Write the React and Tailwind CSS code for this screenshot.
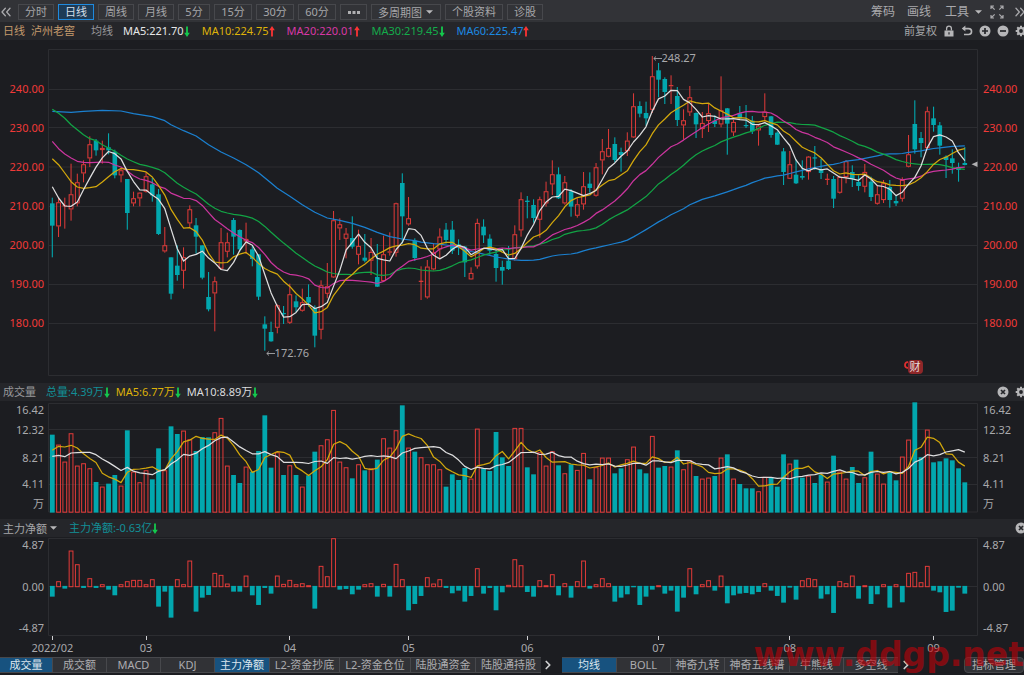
import React from "react";
import { ChevronsLeft, ChevronsRight, ChevronRight } from "lucide-react";

/* ---------- Price data ----------
   Each segment: [base, rows]; a row is [direction, high, bodyTop, bodyBottom, low],
   three units to one chart pixel, measured downwards from the segment's base. */
const SEGMENTS = [
  [132, [
    ["D", 461, 478, 545, 640], ["U", 463, 475, 547, 579], ["U", 461, 484, 487, 554], ["U", 359, 451, 496, 530],
    ["U", 389, 415, 478, 487], ["U", 349, 361, 388, 415], ["U", 277, 301, 343, 369], ["D", 285, 290, 319, 335],
    ["U", 290, 312, 318, 359], ["D", 268, 310, 319, 331], ["D", 317, 323, 394, 403], ["U", 371, 379, 394, 415],
    ["D", 405, 405, 507, 557], ["U", 443, 463, 478, 487], ["U", 445, 446, 463, 487], ["U", 385, 397, 443, 446],
    ["D", 402, 421, 454, 473], ["D", 435, 451, 570, 573], ["U", 549, 604, 622, 626], ["D", 640, 640, 749, 766],
    ["D", 604, 665, 693, 710], ["U", 610, 640, 680, 734], ["U", 484, 496, 538, 551], ["D", 522, 544, 578, 629],
    ["D", 604, 604, 701, 706], ["D", 684, 759, 796, 802], ["U", 698, 712, 748, 862], ["U", 552, 595, 674, 677],
    ["U", 566, 595, 623, 640], ["D", 522, 528, 578, 632], ["D", 556, 558, 616, 623], ["U", 536, 585, 592, 630],
    ["D", 606, 616, 645, 667],
  ]],
  [420, [
    ["D", 343, 343, 470, 480], ["D", 529, 553, 566, 632], ["D", 545, 576, 604, 605], ["U", 493, 496, 563, 580],
    ["D", 498, 519, 521, 552], ["U", 431, 463, 548, 552], ["D", 466, 484, 502, 516], ["U", 446, 487, 512, 515],
    ["D", 433, 471, 488, 500], ["D", 496, 504, 587, 622], ["U", 421, 436, 569, 598], ["U", 369, 439, 461, 475],
    ["U", 213, 241, 412, 414], ["U", 235, 253, 265, 300], ["U", 264, 281, 296, 355], ["D", 229, 294, 320, 326],
    ["U", 269, 318, 344, 373], ["D", 282, 353, 362, 367], ["U", 294, 336, 362, 405], ["D", 312, 411, 440, 441],
    ["U", 287, 343, 423, 426], ["U", 277, 334, 338, 347], ["U", 188, 190, 338, 350], ["D", 100, 129, 229, 311],
    ["U", 171, 235, 253, 257], ["D", 295, 302, 354, 363], ["U", 379, 423, 425, 480], ["U", 360, 380, 472, 476],
    ["U", 309, 337, 388, 391], ["U", 265, 290, 328, 355], ["D", 249, 269, 300, 311], ["D", 243, 269, 332, 342],
    ["D", 298, 313, 322, 345], ["D", 318, 320, 367, 411], ["U", 382, 399, 418, 419], ["U", 236, 249, 379, 386],
    ["D", 238, 260, 286, 309], ["D", 283, 296, 332, 344], ["D", 330, 342, 384, 425], ["D", 362, 381, 392, 434],
    ["D", 318, 362, 387, 390], ["U", 256, 283, 358, 362], ["U", 157, 178, 271, 290], ["D", 168, 182, 186, 235],
    ["D", 178, 195, 234, 248], ["U", 170, 178, 239, 293], ["U", 125, 154, 190, 200], ["U", 61, 103, 133, 165],
    ["D", 82, 103, 175, 177], ["U", 108, 127, 190, 194], ["D", 147, 154, 200, 230], ["U", 175, 193, 227, 233],
    ["U", 96, 139, 193, 209], ["D", 97, 131, 144, 158],
  ]],
  [132, [
    ["U", 357, 370, 455, 458], ["U", 285, 322, 349, 391], ["U", 255, 312, 338, 340], ["D", 280, 300, 348, 355],
    ["D", 311, 324, 333, 383], ["U", 265, 290, 321, 336], ["U", 148, 187, 280, 282], ["D", 172, 186, 209, 220],
    ["D", 173, 207, 223, 245], ["U", 36, 97, 197, 207], ["D", 57, 79, 107, 160], ["D", 100, 105, 144, 180],
    ["U", 94, 123, 127, 180], ["D", 129, 156, 228, 246], ["U", 196, 229, 244, 287], ["U", 126, 160, 205, 216],
    ["D", 205, 207, 241, 282], ["U", 204, 237, 255, 282], ["U", 180, 208, 231, 264], ["D", 214, 230, 240, 249],
    ["U", 97, 199, 241, 250], ["D", 192, 193, 239, 332], ["U", 228, 234, 265, 276], ["D", 186, 208, 223, 226],
    ["D", 183, 243, 246, 252], ["D", 216, 230, 262, 270], ["U", 240, 245, 259, 305], ["U", 148, 203, 219, 232],
    ["D", 216, 217, 273, 281], ["D", 262, 266, 302, 303],
  ]],
  [240, [
    ["D", 204, 214, 276, 315], ["U", 213, 253, 296, 297], ["D", 238, 284, 310, 312], ["D", 241, 288, 293, 299],
    ["U", 228, 230, 276, 299], ["D", 198, 232, 235, 270], ["D", 237, 267, 279, 297], ["U", 281, 297, 299, 315],
    ["D", 288, 297, 356, 384], ["U", 287, 291, 338, 341], ["U", 240, 244, 291, 310], ["D", 256, 276, 296, 321],
    ["D", 286, 306, 318, 332], ["U", 252, 276, 320, 337], ["D", 290, 305, 351, 363], ["U", 316, 343, 371, 374],
    ["U", 300, 310, 360, 369], ["D", 300, 321, 360, 383], ["D", 347, 363, 370, 378], ["U", 292, 300, 356, 365],
    ["U", 165, 223, 260, 262], ["D", 61, 132, 208, 221], ["D", 156, 174, 189, 232], ["U", 80, 94, 204, 206],
    ["D", 80, 115, 135, 155], ["D", 126, 136, 197, 224], ["D", 226, 230, 240, 294], ["D", 208, 235, 249, 281],
    ["D", 248, 261, 270, 305], ["D", 201, 249, 255, 256],
  ]],
];

const CANDLES = SEGMENTS.flatMap(([base, rows]) =>
  rows.map(([dir, ...v]) => {
    const [high, top, bottom, low] = v.map((n) => (n + base) / 3 - 40);
    return { up: dir === "U", high, top, bottom, low };
  })
);

/* Averages for the days before enough closes are on the chart. */
const MA_HEADS = {
  5: [560, 594, 618, 619],
  10: [476, 494, 519, 545, 561, 565, 563, 560, 546],
  20: [424, 446, 462, 474, 484, 487, 488, 487, 486, 487, 495, 501, 513, 527, 537, 541, 548, 559, 565],
  30: [328, 340, 355, 374, 389, 404, 416, 422, 434, 444, 454, 466, 477, 485, 493, 497, 502, 508, 518, 534, 550, 562, 572, 582, 597, 613, 625, 634, 639],
};
const MA60_HEAD = [
  [0, 334], [3, 337], [5, 334], [8, 331], [11, 333], [13, 341], [16, 350], [18, 362], [19, 374], [21, 392],
  [23, 408], [25, 434], [27, 456], [29, 474], [31, 494], [33, 518], [35, 549], [36, 565], [38, 589], [40, 614],
  [42, 637], [44, 654], [46, 661], [48, 670], [50, 682], [52, 697], [54, 710], [56, 717], [58, 722],
];

const VOLUME_TOPS = [
  164, 194, 245, 160, 257, 250, 265, 306, 320, 311, 285, 317, 151, 275, 307, 271, 298, 205, 271, 139, 162,
  152, 178, 213, 171, 172, 157, 114, 257, 285, 309, 260, 275, 213, 106, 263, 217, 285, 256, 285, 320, 286,
  215, 196, 178, 90, 245, 262, 295, 253, 271, 265, 239, 175, 203, 151, 76, 203, 215, 232, 253, 253, 268,
  320, 283, 300, 264, 296, 146, 265, 273, 156, 232, 258, 144, 144, 262, 283, 217, 257, 214, 256, 280, 253,
  270, 219, 298, 262, 233, 233, 280, 265, 238, 200, 268, 280, 168, 263, 258, 260, 211, 268, 241, 288, 296,
  293, 288, 233, 223, 296, 312, 325, 325, 334, 291, 291, 320, 223, 251, 239, 293, 287, 309, 284, 305, 227,
  275, 296, 261, 309, 292, 215, 281, 311, 277, 301, 230, 179, 67, 232, 149, 247, 244, 235, 241, 265, 307,
];
const VOLUME_HEADS = {
  5: [211, 199, 201, 196],
  10: [229, 226, 230, 219, 218, 217, 217, 224, 237],
};

const FLOW = [
  -31, 15, -7, 107, 66, -5, 24, -5, 6, -10, -27, 6, 15, 19, 19, 6, 21, -61, -16, -94, 21, 6, 77, -76, -34,
  -26, 40, 34, 8, -16, -16, 32, -27, -56, -5, -22, 32, 7, 19, 6, 9, 3, -67, 61, 30, 144, -10, -8, -24, -10,
  6, 9, -31, 7, -31, 67, 21, -72, -53, -29, 27, 8, 21, -5, -21, -13, -46, -29, 54, -22, -5, -72, -18, 4, 81,
  63, -17, -31, 18, 3, 36, -27, 9, -34, 15, 77, -7, 6, 24, 9, -46, -34, -24, -3, -56, -31, -10, 3, -22, -13,
  -76, -34, 54, -24, 6, 18, -13, 32, -51, -27, -22, -20, -24, -17, 9, -13, -29, -49, -4, -40, 18, 24, 21,
  -37, -24, -80, 15, 9, 32, -37, 3, -53, -24, 6, -64, 6, -48, 40, 43, 12, 61, -13, -18, -77, -73, -4, -22,
];

const MONTHS = [
  [0, "2022/02"], [15, "03"], [38, "04"], [57, "05"], [76, "06"], [97, "07"], [118, "08"], [141, "09"],
];

const TEAL = "#02a7ae";
const RED = "#e33b39";
const GRID = "#2c2d31";
const xAt = (i) => 4.3 + i * 6.25;

const average = (values, n) => {
  const out = [];
  for (let i = n - 1; i < values.length; i++) {
    let sum = 0;
    for (let k = i - n + 1; k <= i; k++) sum += values[k];
    out.push([i, sum / n]);
  }
  return out;
};
const points = (pairs) => pairs.map(([i, y]) => `${xAt(i).toFixed(1)},${y.toFixed(1)}`).join(" ");

const closes = CANDLES.map((c) => (c.up ? c.top : c.bottom));
const priceLine = (n) =>
  points([...MA_HEADS[n].map((y, i) => [i, y / 3 - 40]), ...average(closes, n)]);
const price60 = points([...MA60_HEAD.map(([i, y]) => [i, y / 3 - 40]), ...average(closes, 60)]);

const volumeY = VOLUME_TOPS.map((t) => t / 3 - 21);
const volumeLine = (n) =>
  points([...VOLUME_HEADS[n].map((y, i) => [i, y / 3 - 21]), ...average(volumeY, n)]);

function Line({ pts, color }) {
  return <polyline points={pts} fill="none" stroke={color} strokeWidth="1.25" strokeLinejoin="round" />;
}

function Frame({ top, bottom, lines }) {
  return (
    <g stroke={GRID} fill="none">
      {lines.map((y) => (
        <path key={y} d={`M0.5 ${y}H929.5`} />
      ))}
      <path d={`M0.5 ${top}H929.5V${bottom}H0.5Z`} />
    </g>
  );
}

function PriceChart() {
  return (
    <svg viewBox="0 0 930 343" preserveAspectRatio="none" className="absolute inset-0 size-full" role="img" aria-label="日线">
      <Frame top={9.5} bottom={335.5} lines={[49.5, 87.5, 127, 166.5, 205.5, 244.5, 283.5]} />
      {CANDLES.map((c, i) => {
        const x = xAt(i);
        const h = c.bottom - c.top;
        if (!c.up) {
          return (
            <g key={i} fill={TEAL}>
              <rect x={x - 0.55} y={c.high} width="1.1" height={c.low - c.high} />
              <rect x={x - 2.3} y={c.top} width="4.6" height={Math.max(h, 1.2)} />
            </g>
          );
        }
        return (
          <g key={i} fill="none" stroke={RED}>
            <path d={`M${x} ${c.high}V${c.top}M${x} ${c.bottom}V${c.low}`} />
            {h < 1.6 ? (
              <path d={`M${x - 2.3} ${c.top + h / 2}h4.6`} strokeWidth="1.2" />
            ) : (
              <rect x={x - 1.9} y={c.top + 0.4} width="3.8" height={Math.max(h - 0.8, 0.8)} />
            )}
          </g>
        );
      })}
      <Line pts={price60} color="#1b80d0" />
      <Line pts={priceLine(30)} color="#12a445" />
      <Line pts={priceLine(20)} color="#cb359e" />
      <Line pts={priceLine(10)} color="#d3a80c" />
      <Line pts={priceLine(5)} color="#dededf" />
      <path d="M929.5 121.5v5.5l-6-2.7z" fill="#b0b0b2" />
    </svg>
  );
}

function VolumeChart() {
  return (
    <svg viewBox="0 0 930 118" preserveAspectRatio="none" className="absolute inset-0 size-full" role="img" aria-label="成交量">
      <Frame top={2.5} bottom={111} lines={[28.5, 56.5, 83.5]} />
      {volumeY.map((y, i) =>
        CANDLES[i].up ? (
          <rect key={i} x={xAt(i) - 1.9} y={y + 0.4} width="3.8" height={110.8 - y} fill="none" stroke={RED} />
        ) : (
          <rect key={i} x={xAt(i) - 2.4} y={y} width="4.8" height={111.6 - y} fill={TEAL} />
        )
      )}
      <Line pts={volumeLine(5)} color="#d3a80c" />
      <Line pts={volumeLine(10)} color="#dededf" />
    </svg>
  );
}

function FlowChart() {
  const zero = 49.3;
  return (
    <svg viewBox="0 0 930 99" preserveAspectRatio="none" className="absolute inset-0 size-full" role="img" aria-label="主力净额">
      <Frame top={1.5} bottom={98.5} lines={[49.5]} />
      {FLOW.map((v, i) =>
        v > 0 ? (
          <rect key={i} x={xAt(i) - 1.9} y={zero - v / 3 + 0.4} width="3.8" height={v / 3} fill="none" stroke={RED} />
        ) : (
          <rect key={i} x={xAt(i) - 2.4} y={zero - 0.4} width="4.8" height={-v / 3 + 0.4} fill={TEAL} />
        )
      )}
    </svg>
  );
}

/* ---------- Small icons ---------- */
function Trend({ up }) {
  return (
    <svg viewBox="0 0 6 11" className="h-[11px] w-[6px] shrink-0" aria-hidden="true">
      <path
        d={up ? "M3 0L5.8 4.2H3.9V10.5H2.1V4.2H.2Z" : "M3 11L5.8 6.8H3.9V.5H2.1V6.8H.2Z"}
        fill={up ? "#fb3433" : "#14c94d"}
      />
    </svg>
  );
}

function Caret() {
  return (
    <svg viewBox="0 0 8 4" className="pointer-events-none h-1 w-[7px] shrink-0" aria-hidden="true">
      <path d="M0 0H8L4 4Z" fill="#b8b8ba" />
    </svg>
  );
}

function Pointer() {
  return (
    <svg viewBox="0 0 9 5" className="h-[5px] w-[9px]" fill="none" stroke="#a6a6a9" aria-hidden="true">
      <path d="M9 2.5H.8M3 .5L.8 2.5L3 4.5" strokeWidth=".9" />
    </svg>
  );
}

function IconButton({ label, children }) {
  return (
    <button type="button" aria-label={label} className="size-3 shrink-0 text-[#b6b6b8]">
      <svg viewBox="0 0 12 12" className="size-3" fill="currentColor" aria-hidden="true">
        {children}
      </svg>
    </button>
  );
}

const Gear = () => (
  <IconButton label="设置">
    <g stroke="currentColor" strokeWidth="2">
      <path d="M6 .7V11.3M.7 6H11.3M2.25 2.25L9.75 9.75M9.75 2.25L2.25 9.75" />
    </g>
    <circle cx="6" cy="6" r="4" />
    <circle cx="6" cy="6" r="1.9" fill="#25262a" />
  </IconButton>
);

const Close = () => (
  <IconButton label="关闭">
    <circle cx="6" cy="6" r="5.5" />
    <path d="M4 4L8 8M8 4L4 8" stroke="#25262a" strokeWidth="1.7" />
  </IconButton>
);

/* ---------- Page parts ---------- */
function PeriodButton({ width, active, children }) {
  return (
    <button
      type="button"
      className={`flex h-4 items-center justify-center border ${width} ${
        active ? "border-[#1f8ade] bg-[#1d3b56] text-[#d5dfe8]" : "border-[#47484c] text-[#a6a6a9]"
      }`}
    >
      {children}
    </button>
  );
}

const PERIODS = [
  ["分时", "w-9"], ["日线", "w-9"], ["周线", "w-9"], ["月线", "w-9"],
  ["5分", "w-8"], ["15分", "w-[38px]"], ["30分", "w-[38px]"], ["60分", "w-[38px]"],
];

function Toolbar() {
  return (
    <nav className="flex h-[22px] items-center justify-between overflow-hidden bg-[#323337] pt-0.5 text-[#a9a9ac]">
      <div className="flex items-center gap-1">
        <button type="button" aria-label="收起" className="w-[14px]">
          <ChevronsLeft className="-ml-0.5 h-[18px] w-4" preserveAspectRatio="none" strokeWidth={2} />
        </button>
        {PERIODS.map(([label, width]) => (
          <PeriodButton key={label} width={width} active={label === "日线"}>
            {label}
          </PeriodButton>
        ))}
        <PeriodButton width="w-[27px]">
          <svg viewBox="0 0 12 3" className="h-[3px] w-3" fill="#b0b0b2" role="img" aria-label="更多周期">
            <path d="M0 0h3v3H0zM4.5 0h3v3h-3zM9 0h3v3H9z" />
          </svg>
        </PeriodButton>
        <div className="flex h-4 w-[70px] items-center border border-[#47484c] pl-1.5 text-[#a6a6a9]">
          <select aria-label="多周期图" className="h-full w-12 appearance-none bg-transparent leading-none outline-none">
            <option>多周期图</option>
          </select>
          <Caret />
        </div>
        <PeriodButton width="w-[58px]">个股资料</PeriodButton>
        <PeriodButton width="w-9">诊股</PeriodButton>
      </div>
      <div className="-mr-1 flex items-center text-xs">
        <button type="button" className="mr-3">筹码</button>
        <button type="button" className="mr-3.5">画线</button>
        <button type="button" aria-haspopup="menu" className="mr-2 flex items-center gap-1.5">
          工具
          <Caret />
        </button>
        <button type="button" aria-label="全屏" className="mr-2">
          <svg viewBox="0 0 14 14" className="size-[14px]" fill="none" stroke="currentColor" strokeWidth="1.2" aria-hidden="true">
            <path d="M1 4V1H4M1 1L4.7 4.7M10 1H13V4M13 1L9.3 4.7M1 10V13H4M1 13L4.7 9.3M13 10V13H10M13 13L9.3 9.3" />
          </svg>
        </button>
        <button type="button" aria-label="展开">
          <ChevronsRight className="h-[18px] w-4" preserveAspectRatio="none" strokeWidth={2} />
        </button>
      </div>
    </nav>
  );
}

function Reading({ color, up, children }) {
  return (
    <span className={`flex items-center ${color}`}>
      {children}
      <Trend up={up} />
    </span>
  );
}

function InfoBar() {
  return (
    <header className="flex h-[18px] items-center justify-between overflow-hidden bg-[#25262a]">
      <div className="flex items-center gap-3 pl-[3px]">
        <span className="flex gap-1.5 pr-1 text-[#c49a6c]">
          <span>日线</span>
          <span>泸州老窖</span>
        </span>
        <span className="-mr-0.5 text-[#98989b]">均线</span>
        <Reading color="text-[#e6e6e8]">MA5:221.70</Reading>
        <Reading color="text-[#deb208]" up>MA10:224.75</Reading>
        <Reading color="text-[#d838a6]" up>MA20:220.01</Reading>
        <Reading color="text-[#14ac4a]">MA30:219.45</Reading>
        <Reading color="text-[#1c8ae2]" up>MA60:225.47</Reading>
      </div>
      <div className="-mr-[3px] flex items-center gap-1.5 text-[#a6a6a9]">
        <button type="button">前复权</button>
        <IconButton label="锁定">
          <path d="M1.5 5.5h9v6h-9z" />
          <path d="M3.6 5.5V3.6a2.4 2.4 0 0 1 4.8 0V5.5" fill="none" stroke="currentColor" strokeWidth="1.3" />
          <path d="M5.4 7.3h1.2v2.2H5.4z" fill="#25262a" />
        </IconButton>
        <IconButton label="撤销">
          <path d="M2.5 3.6H7.6a2.9 2.9 0 0 1 0 5.9H3" fill="none" stroke="currentColor" strokeWidth="1.6" />
          <path d="M4.4 .6V6.6L.8 3.6Z" />
        </IconButton>
        <IconButton label="放大">
          <circle cx="6" cy="6" r="5.5" />
          <path d="M6 3V9M3 6H9" stroke="#25262a" strokeWidth="1.7" />
        </IconButton>
        <IconButton label="缩小">
          <circle cx="6" cy="6" r="5.5" />
          <path d="M3 6H9" stroke="#25262a" strokeWidth="1.7" />
        </IconButton>
        <Gear />
      </div>
    </header>
  );
}

const PRICES = ["240.00", "230.00", "220.00", "210.00", "200.00", "190.00", "180.00"];

function PriceAxis({ side }) {
  return (
    <div className={`flex shrink-0 flex-col text-[#f03a38] ${side}`}>
      <div className="grow-29 basis-0" />
      {PRICES.map((p) => (
        <div key={p} className="flex grow-39 basis-0 items-center">{p}</div>
      ))}
      <div className="grow-41 basis-0" />
    </div>
  );
}

function VolumeAxis({ side }) {
  return (
    <div className={`flex shrink-0 flex-col text-[#a9a9ac] ${side}`}>
      <div className="flex h-[17px] items-center">16.42</div>
      <div className="flex h-6 items-center">12.32</div>
      <div className="flex h-[31px] items-center">8.21</div>
      <div className="flex h-[22px] items-center">4.11</div>
      <div className="flex h-[18px] items-center">万</div>
    </div>
  );
}

function FlowAxis({ side }) {
  return (
    <div className={`flex shrink-0 flex-col justify-between text-[#a9a9ac] ${side}`}>
      <span>4.87</span>
      <span>0.00</span>
      <span>-4.87</span>
    </div>
  );
}

const LEFT = "w-12 items-end pr-1";
const RIGHT = "w-[46px] items-start pl-[5px]";

function MonthAxis() {
  return (
    <div className="flex h-5 pr-[46px] pl-12 text-[#a9a9ac]">
      <div className="flex flex-1">
        <span className="basis-0" style={{ flexGrow: xAt(0) }} />
        {MONTHS.map(([i, label], k) => {
          const next = k + 1 < MONTHS.length ? xAt(MONTHS[k + 1][0]) : 930;
          return (
            <React.Fragment key={label}>
              <span className="flex w-0 flex-col items-center whitespace-nowrap">
                <span className="h-1 w-px shrink-0 bg-[#d0d0d2]" />
                <span>{label}</span>
              </span>
              <span className="basis-0" style={{ flexGrow: next - xAt(i) }} />
            </React.Fragment>
          );
        })}
      </div>
    </div>
  );
}

function Tabs({ items, active, label }) {
  return (
    <div aria-label={label} role="group" className="flex h-4 divide-x divide-[#47484c] border-y border-[#47484c] bg-[#313236]">
      {items.map(([name, width]) => (
        <button
          key={name}
          type="button"
          aria-pressed={active.includes(name)}
          className={`flex items-center justify-center whitespace-nowrap ${width} ${
            active.includes(name) ? "bg-[#17527f] text-[#dbe6ee]" : "text-[#acacaf]"
          }`}
        >
          {name}
        </button>
      ))}
    </div>
  );
}

const INDICATORS = [
  ["成交量", "w-[53px]"], ["成交额", "w-[54px]"], ["MACD", "w-[54px]"], ["KDJ", "w-[54px]"],
  ["主力净额", "w-[55px]"], ["L2-资金抄底", "w-[70px]"], ["L2-资金仓位", "w-[71px]"],
  ["陆股通资金", "w-[65px]"], ["陆股通持股", "w-[65px]"],
];
const OVERLAYS = [
  ["均线", "w-[55px]"], ["BOLL", "w-[54px]"], ["神奇九转", "w-[54px]"], ["神奇五线谱", "w-[65px]"],
  ["牛熊线", "w-[54px]"], ["多空线", "w-[54px]"],
];

function BottomBar() {
  return (
    <footer className="relative flex h-[19px] items-start pt-px">
      <Tabs label="副图指标" items={INDICATORS} active={["成交量", "主力净额"]} />
      <button type="button" aria-label="更多副图指标" className="flex h-4 w-[21px] items-center justify-center pr-2 text-[#d0d0d2]">
        <ChevronRight className="size-3.5 shrink-0" strokeWidth={3} />
      </button>
      <Tabs label="主图指标" items={OVERLAYS} active={["均线"]} />
      <button type="button" aria-label="更多主图指标" className="flex h-4 w-4 items-center justify-center text-[#d0d0d2]">
        <ChevronRight className="size-3.5 shrink-0" strokeWidth={3} />
      </button>
      <button type="button" className="ml-auto flex h-4 w-[60px] items-center justify-center rounded-sm border border-[#47484c] bg-[#313236] text-[#acacaf]">
        指标管理
      </button>
      <span className="pointer-events-none absolute right-0 bottom-0 font-['DejaVu_Sans',sans-serif] text-[33px] leading-10 font-bold text-[#c00008]/60">
        www.ddgp.net
      </span>
    </footer>
  );
}

export default function App() {
  return (
    <main className="flex min-h-screen flex-col overflow-hidden bg-[#1c1d21] font-['Noto_Sans','Noto_Sans_CJK_SC',sans-serif] text-[11px] leading-4">
      <Toolbar />
      <InfoBar />

      <section className="flex min-h-[343px] flex-1">
        <PriceAxis side={LEFT + " [&>div]:justify-end"} />
        <div className="relative flex-1">
          <PriceChart />
          <span className="absolute top-[5.3%] left-[65%] flex -translate-y-1/2 items-center text-[#a9a9ac]">
            <Pointer />
            248.27
          </span>
          <span className="absolute top-[91.3%] left-[23.4%] flex -translate-y-1/2 items-center text-[#a9a9ac]">
            <Pointer />
            172.76
          </span>
          <span className="absolute top-[95.4%] left-[92%] flex -translate-y-1/2 items-center">
            <svg viewBox="0 0 4 8" className="-mt-1 h-2 w-1" fill="none" stroke="#e02f2f" strokeWidth="1.8" aria-hidden="true">
              <path d="M4 1.2Q1 1 1 4T4 6.8" />
            </svg>
            <span className="flex h-[14px] items-center rounded-sm bg-[#8f2729] px-0.5 text-[#e6dede]">财</span>
          </span>
        </div>
        <PriceAxis side={RIGHT} />
      </section>

      <header className="flex h-[18px] items-center justify-between overflow-hidden bg-[#25262a]">
        <div className="flex items-center gap-1.5 pl-[3px]">
          <span className="pr-1 text-[#98989b]">成交量</span>
          <Reading color="text-[#128f97]">总量:4.39万</Reading>
          <Reading color="text-[#deb208]">MA5:6.77万</Reading>
          <Reading color="text-[#dcdcde]">MA10:8.89万</Reading>
        </div>
        <div className="-mr-[3px] flex items-center gap-1.5">
          <Close />
          <Gear />
        </div>
      </header>
      <section className="flex h-[118px]">
        <VolumeAxis side={LEFT} />
        <div className="relative flex-1">
          <VolumeChart />
        </div>
        <VolumeAxis side={RIGHT} />
      </section>

      <header className="flex h-[18px] items-center justify-between overflow-hidden bg-[#25262a]">
        <div className="flex items-center gap-3 pl-[3px]">
          <div className="flex items-center text-[#a6a6a9]">
            <select aria-label="副图指标" className="h-4 w-[47px] appearance-none bg-transparent leading-none outline-none">
              <option>主力净额</option>
            </select>
            <Caret />
          </div>
          <Reading color="text-[#128f97]">主力净额:-0.63亿</Reading>
        </div>
        <div className="-mr-[3px] flex">
          <Close />
        </div>
      </header>
      <section className="flex h-[99px]">
        <FlowAxis side={LEFT} />
        <div className="relative flex-1">
          <FlowChart />
        </div>
        <FlowAxis side={RIGHT} />
      </section>

      <MonthAxis />
      <BottomBar />
    </main>
  );
}
